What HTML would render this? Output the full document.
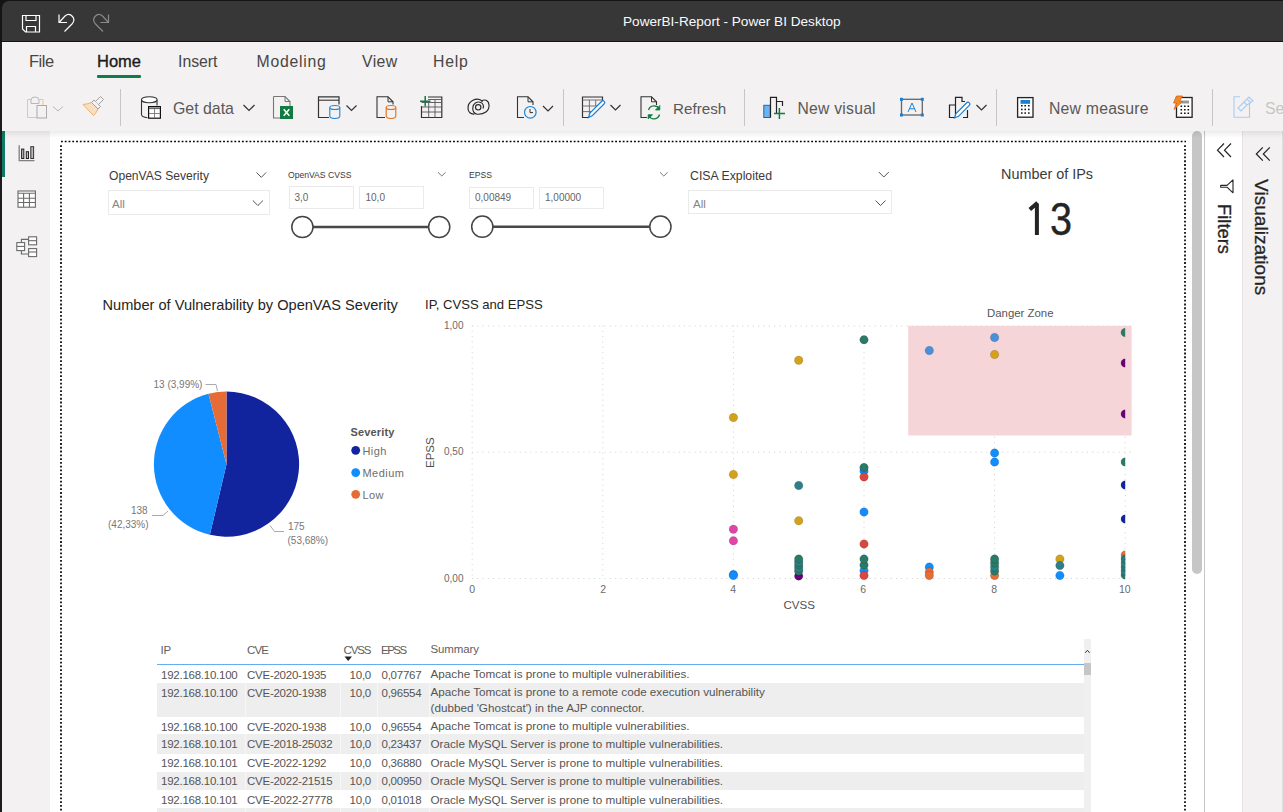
<!DOCTYPE html>
<html><head><meta charset="utf-8">
<style>
*{box-sizing:border-box}
html,body{margin:0;padding:0}
body{width:1283px;height:812px;overflow:hidden;position:relative;background:#fff;font-family:"Liberation Sans",sans-serif;color:#252423}
.a{position:absolute}
.t{position:absolute;white-space:nowrap;line-height:1}
svg{position:absolute;overflow:visible}
</style></head><body>
<!-- window frame -->
<div class="a" style="left:0;top:0;width:1283px;height:42px;background:#141416"></div>
<div class="a" style="left:2px;top:1px;width:1281px;height:40px;background:#373737;border-top-left-radius:7px"></div>
<div class="a" style="left:0;top:42px;width:2px;height:770px;background:#1c1c20"></div>
<div class="t" style="left:623px;top:15px;font-size:13.6px;color:#fafafa">PowerBI-Report - Power BI Desktop</div>

<!-- ribbon -->
<div class="a" style="left:2px;top:42px;width:1281px;height:89px;background:#f3f1f2"></div>
<div class="t" style="left:29px;top:52.8px;font-size:16.5px;letter-spacing:-0.5px;color:#484644">File</div>
<div class="t" style="left:97px;top:52.5px;font-size:16.5px;color:#1b1a19;-webkit-text-stroke:0.35px #1b1a19">Home</div>
<div class="a" style="left:97px;top:74.8px;width:44px;height:2.8px;background:#107c4c;border-radius:1px"></div>
<div class="t" style="left:178px;top:54px;font-size:15.8px;color:#484644">Insert</div>
<div class="t" style="left:256.5px;top:54px;font-size:15.8px;letter-spacing:0.75px;color:#484644">Modeling</div>
<div class="t" style="left:362px;top:54px;font-size:15.8px;letter-spacing:0.4px;color:#484644">View</div>
<div class="t" style="left:433px;top:54px;font-size:15.8px;letter-spacing:0.8px;color:#484644">Help</div>

<!-- ribbon buttons text -->
<div class="t" style="left:173px;top:101px;font-size:15.9px;color:#5a5856">Get data</div>
<div class="t" style="left:673px;top:101px;font-size:15.2px;color:#5a5856">Refresh</div>
<div class="t" style="left:797.5px;top:101px;font-size:15.7px;letter-spacing:0.25px;color:#5a5856">New visual</div>
<div class="t" style="left:1049px;top:101px;font-size:15.8px;letter-spacing:0.2px;color:#5a5856">New measure</div>
<div class="t" style="left:1265px;top:101px;font-size:15.8px;color:#c8c6c4">Se</div>
<!-- separators -->
<div class="a" style="left:120px;top:89px;width:1px;height:37px;background:#c8c6c4"></div>
<div class="a" style="left:563px;top:89px;width:1px;height:37px;background:#c8c6c4"></div>
<div class="a" style="left:744px;top:89px;width:1px;height:37px;background:#c8c6c4"></div>
<div class="a" style="left:996px;top:89px;width:1px;height:37px;background:#c8c6c4"></div>
<div class="a" style="left:1212px;top:89px;width:1px;height:37px;background:#c8c6c4"></div>


<!-- ribbon icons -->
<svg width="1283" height="131" style="left:0;top:0" fill="none" stroke-linejoin="miter">
 <!-- titlebar icons -->
 <g stroke="#fff" stroke-width="1.2">
  <path d="M22.5 15.5 H39.5 V32 H25.5 L22.5 29 Z"/>
  <path d="M26 15.5 V20.5 H36 V15.5"/>
  <path d="M26.5 32 V26.5 H35.5 V32"/>
 </g>
 <path d="M59 14.5 V22.5 H67" stroke="#fff" stroke-width="1.2"/>
 <path d="M59.5 22 L65 16 Q69 12.5 72.5 16.5 Q75.5 20 72 24 L64.5 31.5" stroke="#fff" stroke-width="1.2"/>
 <g stroke="#8a8a8a" stroke-width="1.2">
  <path d="M108.5 14.5 V22.5 H100.5"/>
  <path d="M108 22 L102.5 16 Q98.5 12.5 95 16.5 Q92 20 95.5 24 L103 31.5"/>
 </g>
 <!-- paste -->
 <path d="M31 99.5 H27.5 V117.5 H37 M39.5 99.5 H43 V105" stroke="#f2c48a" stroke-width="1"/>
 <path d="M31 103.5 V100 Q31 97 35 97 Q39 97 39 100 V103.5 Z" stroke="#b8b8b8" stroke-width="1" fill="#f3f1f2"/>
 <rect x="37" y="105.5" width="9.5" height="12.5" stroke="#ababab" stroke-width="1" fill="#f3f1f2"/>
 <path d="M53 106.5 L58 111 L63 106.5" stroke="#b8b8b8" stroke-width="1"/>
 <!-- format painter -->
 <path d="M83 104.5 Q88 104 91.5 102.5 L98 109 Q96.5 112.5 93.5 115.5 Z" stroke="#f0b070" stroke-width="1" fill="#f8dfc0"/>
 <path d="M91.5 102.5 L94 100 L100.5 106.5 L98 109 Z" stroke="#a0a0a0" stroke-width="1" fill="#f3f1f2"/>
 <path d="M95.5 101.5 L100.5 96.5 L103.5 99.5 L98.5 104.5" stroke="#a0a0a0" stroke-width="1" fill="#f3f1f2"/>
 <!-- get data -->
 <path d="M141.5 100 V114.5 Q141.5 117 147.5 117.8" stroke="#333" stroke-width="1.1"/>
 <path d="M157 100 V105.5" stroke="#333" stroke-width="1.1"/>
 <ellipse cx="149.3" cy="99.7" rx="7.8" ry="3" stroke="#333" stroke-width="1.1" fill="#fff"/>
 <rect x="148.6" y="106.6" width="11.8" height="11.6" stroke="#111" stroke-width="1.2" fill="#fff"/>
 <path d="M149 108.3 H160" stroke="#666" stroke-width="1.6"/>
 <path d="M154.5 109 V118 M149 113.5 H160" stroke="#777" stroke-width="0.9"/>
 <path d="M243.5 105 L249 110.5 L254.5 105" stroke="#323130" stroke-width="1.2"/>
 <!-- excel -->
 <path d="M273.5 96.5 H285 L290 101.5 V106 M280 118 H273.5 V96.5" stroke="#777" stroke-width="1.1" fill="none"/>
 <path d="M285 96.5 V101.5 H290" stroke="#777" stroke-width="1"/>
 <rect x="280" y="106" width="13" height="13" fill="#107c41"/>
 <path d="M283.7 109.3 L289.3 115.7 M289.3 109.3 L283.7 115.7" stroke="#fff" stroke-width="1.6"/>
 <!-- dataset window -->
 <path d="M329 117.5 H318.5 V96.8 H339 V104.5" stroke="#333" stroke-width="1.2"/>
 <path d="M318.5 100.2 H339" stroke="#333" stroke-width="1.1"/>
 <path d="M329.8 107.5 V116 Q329.8 118.5 334.8 118.5 Q339.8 118.5 339.8 116 V107.5" stroke="#1a86d8" stroke-width="1.1" fill="#f3f1f2"/>
 <ellipse cx="334.8" cy="107.5" rx="5" ry="2" stroke="#1a86d8" stroke-width="1.1" fill="#f3f1f2"/>
 <path d="M346.5 105.5 L351.5 110.5 L356.5 105.5" stroke="#333" stroke-width="1.2"/>
 <!-- page orange cylinder -->
 <path d="M385 117.5 H377 V96.8 H388 L393 101.8 V104.5" stroke="#333" stroke-width="1.1"/>
 <path d="M388 96.8 V101.8 H393" stroke="#333" stroke-width="1"/>
 <path d="M386.2 107.5 V116 Q386.2 118.5 391 118.5 Q395.8 118.5 395.8 116 V107.5" stroke="#e0701f" stroke-width="1.1" fill="#f3f1f2"/>
 <ellipse cx="391" cy="107.5" rx="4.8" ry="2" stroke="#e0701f" stroke-width="1.1" fill="#f3f1f2"/>
 <!-- enter data -->
 <path d="M421.5 106 V117.5 H441.8 V97 H428" stroke="#333" stroke-width="1.2"/>
 <path d="M428 99.5 H441.8 M421.5 102.5 H441.8 M421.5 107 H441.8 M421.5 112 H441.8 M428.7 102.5 V117.5 M435 99.5 V117.5" stroke="#555" stroke-width="0.9"/>
 <path d="M420 101.2 H430.5 M425.2 96 V106.5" stroke="#107c41" stroke-width="1.5"/>
 <!-- dataverse -->
 <g stroke="#2a2a2a" stroke-width="1.15" fill="none">
  <path d="M474.5 114 C466.5 115 466 104 472.5 100.5 C476.5 98.5 480.5 99.2 482.5 101.5"/>
  <path d="M481.5 101.3 C484 99 488.5 99.5 489 105 C489.5 111 484 114.5 477.5 114.2 C474 114 472.5 111 472.8 108"/>
  <path d="M472.8 108 C473 103 477 101.5 480 102.2 C483.5 103 484 106.5 483 108.5"/>
  <circle cx="478.2" cy="107.3" r="2.7"/>
 </g>
 <!-- page clock -->
 <path d="M524 117.5 H517.5 V96.8 H528 L533 101.8 V105" stroke="#333" stroke-width="1.1"/>
 <path d="M528 96.8 V101.8 H533" stroke="#333" stroke-width="1"/>
 <circle cx="530.3" cy="112.3" r="5.8" stroke="#1a86d8" stroke-width="1.2" fill="#f3f1f2"/>
 <path d="M530 109 V112.6 H533" stroke="#333" stroke-width="1"/>
 <path d="M543 106 L548 111 L553 106" stroke="#333" stroke-width="1.2"/>
 <!-- transform data -->
 <path d="M588 117.5 H582.5 V97 H602.5 V104" stroke="#333" stroke-width="1.2"/>
 <path d="M582.5 100 H602.5 M582.5 106 H598 M582.5 111.6 H592 M589.4 100 V117 M595.7 100 V106" stroke="#666" stroke-width="0.9"/>
 <path d="M588.5 117.5 L590 113 L601.5 101.5 Q603 100 604.3 101.3 Q605.5 102.6 604 104 L592.5 115.5 Z" stroke="#1a7fd4" stroke-width="1.2" fill="#fff"/>
 <path d="M610.5 105 L615.5 110 L620.5 105" stroke="#333" stroke-width="1.2"/>
 <!-- refresh -->
 <path d="M647 117.5 H641 V96.8 H651.5 L656.5 101.8 V105" stroke="#333" stroke-width="1.1"/>
 <path d="M651.5 96.8 V101.8 H656.5" stroke="#333" stroke-width="1"/>
 <path d="M648.5 110 A5.8 5.8 0 0 1 659.2 109 M659.5 114.5 A5.8 5.8 0 0 1 648.8 115.8" stroke="#107c41" stroke-width="1.3"/>
 <path d="M659.8 105.5 V110 H655.5 Z M648.2 119 V114.7 H652.5 Z" fill="#107c41" stroke="#107c41" stroke-width="0.8"/>
 <!-- new visual -->
 <rect x="763.8" y="105.3" width="6.5" height="12.2" fill="#6cb4f0" stroke="#0f6cbd" stroke-width="1"/>
 <path d="M770.5 117.5 V97.3 H776.5 V113 M776.5 101.5 H782.5 V106" stroke="#222" stroke-width="1.2"/>
 <path d="M774 113.4 H785 M779.4 108 V119" stroke="#107c41" stroke-width="1.5"/>
 <!-- text box -->
 <rect x="901.5" y="99.3" width="20.8" height="15.7" stroke="#666" stroke-width="1.3"/>
 <g fill="#1a7fd4"><rect x="900" y="97.8" width="3" height="3"/><rect x="920.8" y="97.8" width="3" height="3"/><rect x="900" y="113.5" width="3" height="3"/><rect x="920.8" y="113.5" width="3" height="3"/></g>
 <path d="M908 112 L912 103 L916 112 M909.5 108.8 H914.5" stroke="#1a86d8" stroke-width="1"/>
 <!-- buttons -->
 <path d="M955 105 H949.5 V117.5 H955 M955.5 117.5 V97.3 H962 V101.5 H965 M967.5 110 V117.5 H963" stroke="#222" stroke-width="1.2"/>
 <path d="M954.5 118 L956 113.5 L966.5 103 Q968 101.5 969.3 102.8 Q970.6 104.1 969 105.6 L958.5 116.3 Z" stroke="#1a7fd4" stroke-width="1.2" fill="#fff"/>
 <path d="M976.5 105 L981.5 110 L986.5 105" stroke="#333" stroke-width="1.2"/>
 <!-- calculator -->
 <rect x="1017.6" y="97.6" width="15.4" height="19.6" stroke="#222" stroke-width="1.3" fill="#fff"/>
 <rect x="1020.5" y="100" width="9.6" height="3.8" fill="#1a7fd4"/>
 <g fill="#111"><rect x="1021" y="105" width="1.6" height="1.5"/><rect x="1024.4" y="105" width="1.6" height="1.5"/><rect x="1028" y="105" width="1.6" height="1.5"/>
 <rect x="1021" y="108.7" width="1.6" height="1.5"/><rect x="1024.4" y="108.7" width="1.6" height="1.5"/><rect x="1028" y="108.7" width="1.6" height="1.5"/>
 <rect x="1021" y="112.3" width="1.6" height="1.5"/><rect x="1024.4" y="112.3" width="1.6" height="1.5"/><rect x="1028" y="112.3" width="1.6" height="1.5"/></g>
 <!-- quick measure -->
 <rect x="1176.5" y="97.5" width="15.6" height="19.8" stroke="#222" stroke-width="1.3" fill="#fff"/>
 <rect x="1180" y="100.5" width="9" height="3" fill="#999"/>
 <g fill="#111"><rect x="1180.5" y="105.5" width="1.6" height="1.5"/><rect x="1184" y="105.5" width="1.6" height="1.5"/><rect x="1187.5" y="105.5" width="1.6" height="1.5"/>
 <rect x="1180.5" y="109" width="1.6" height="1.5"/><rect x="1184" y="109" width="1.6" height="1.5"/><rect x="1187.5" y="109" width="1.6" height="1.5"/>
 <rect x="1180.5" y="112.5" width="1.6" height="1.5"/><rect x="1184" y="112.5" width="1.6" height="1.5"/><rect x="1187.5" y="112.5" width="1.6" height="1.5"/></g>
 <path d="M1176.5 96 H1182.5 L1179.5 101.5 H1182.5 L1174 109.5 L1176.5 103 H1173.5 Z" fill="#f08a24" stroke="#e0601a" stroke-width="0.8"/>
 <!-- disabled -->
 <path d="M1240 96.8 H1234 V117.2 H1249.5 V103" stroke="#a8cdf0" stroke-width="1.1"/>
 <path d="M1238 108 L1244 102 L1247 105 L1241 111 Z M1244 102 L1249 97 L1253 101 L1247 105 M1247 99 L1251 103" stroke="#a8cdf0" stroke-width="1.1"/>
</svg>

<!-- ribbon shadow -->

<!-- left nav -->
<div class="a" style="left:2px;top:131px;width:48px;height:681px;background:#f3f1f2"></div>
<div class="a" style="left:2px;top:131px;width:3px;height:46px;background:#117865"></div>

<!-- page dotted border -->
<svg width="1283" height="812" style="left:0;top:0">
  <path d="M61 141.5 H1186 M61 145.25 V812 M1185 145.25 V812" stroke="#000" stroke-width="1.7" stroke-dasharray="1.8 1.97" fill="none"/>
</svg>


<!-- ===== slicers ===== -->
<div class="t" style="left:109px;top:170px;font-size:12.1px;color:#3b3a39">OpenVAS Severity</div>
<div class="a" style="left:107.5px;top:189.5px;width:162px;height:25px;border:1px solid #eaeaea;background:#fff"></div>
<div class="t" style="left:112px;top:199px;font-size:11.5px;color:#858585">All</div>
<div class="t" style="left:288px;top:170.7px;font-size:8.6px;color:#3b3a39">OpenVAS CVSS</div>
<div class="a" style="left:288.5px;top:186px;width:65.5px;height:22.5px;border:1px solid #eaeaea;background:#fff"></div>
<div class="a" style="left:358.5px;top:186px;width:65.5px;height:22.5px;border:1px solid #eaeaea;background:#fff"></div>
<div class="t" style="left:294.5px;top:193px;font-size:10px;color:#666">3,0</div>
<div class="t" style="left:365.5px;top:193px;font-size:10px;color:#666">10,0</div>
<div class="t" style="left:469px;top:170.7px;font-size:8.6px;color:#3b3a39">EPSS</div>
<div class="a" style="left:468.5px;top:186.5px;width:65.5px;height:22.5px;border:1px solid #eaeaea;background:#fff"></div>
<div class="a" style="left:538.5px;top:186.5px;width:65.5px;height:22.5px;border:1px solid #eaeaea;background:#fff"></div>
<div class="t" style="left:475px;top:193px;font-size:10px;color:#666">0,00849</div>
<div class="t" style="left:545px;top:193px;font-size:10px;color:#666">1,00000</div>
<div class="t" style="left:690px;top:170px;font-size:12.3px;color:#3b3a39">CISA Exploited</div>
<div class="a" style="left:688px;top:190px;width:204px;height:24px;border:1px solid #eaeaea;background:#fff"></div>
<div class="t" style="left:693px;top:199px;font-size:11.5px;color:#858585">All</div>
<svg width="1283" height="300" style="left:0;top:0" fill="none">
 <path d="M256.5 172.5 L261.3 177.3 L266.1 172.5" stroke="#555" stroke-width="1"/>
 <path d="M252.8 200.5 L257.9 205.6 L263 200.5" stroke="#555" stroke-width="1"/>
 <path d="M438 172.3 L441.8 176 L445.6 172.3" stroke="#666" stroke-width="0.9"/>
 <path d="M660 172.3 L663.8 176 L667.6 172.3" stroke="#666" stroke-width="0.9"/>
 <path d="M878.8 172 L883.8 177 L888.8 172" stroke="#555" stroke-width="1"/>
 <path d="M875.5 200.5 L880.5 205.5 L885.5 200.5" stroke="#555" stroke-width="1"/>
 <path d="M313 227 H428.5" stroke="#484848" stroke-width="2.6"/>
 <circle cx="302.4" cy="227" r="10.6" stroke="#444" stroke-width="1.5" fill="#fff"/>
 <circle cx="439.2" cy="227" r="10.6" stroke="#444" stroke-width="1.5" fill="#fff"/>
 <path d="M493 226.7 H649.5" stroke="#484848" stroke-width="2.6"/>
 <circle cx="482.3" cy="226.7" r="10.6" stroke="#444" stroke-width="1.5" fill="#fff"/>
 <circle cx="660.4" cy="226.7" r="10.6" stroke="#444" stroke-width="1.5" fill="#fff"/>
</svg>
<!-- KPI card -->
<div class="t" style="left:1001px;top:167px;font-size:14.4px;color:#3b3a39">Number of IPs</div>
<svg width="1283" height="812" style="left:0;top:0"><path d="M1036.9 203.6 V235.1 M1037.6 202.8 L1029.8 209.5" stroke="#252423" stroke-width="4" stroke-linecap="butt" fill="none"/></svg>
<div class="t" style="left:1049.5px;top:196px;font-size:46px;color:#252423;-webkit-text-stroke:0.4px #252423;transform-origin:0 0;transform:scaleX(0.86)">3</div>


<!-- ===== pie chart ===== -->
<div class="t" style="left:102.5px;top:298px;font-size:14.6px;color:#252423">Number of Vulnerability by OpenVAS Severity</div>
<svg width="1283" height="812" style="left:0;top:0">
 <path d="M226.5 464.2 L226.50 391.60 A72.6 72.6 0 1 1 209.86 534.87 Z" fill="#12239e"/>
 <path d="M226.5 464.2 L209.86 534.87 A72.6 72.6 0 0 1 208.49 393.87 Z" fill="#118dff"/>
 <path d="M226.5 464.2 L208.49 393.87 A72.6 72.6 0 0 1 226.50 391.60 Z" fill="#e66c37"/>
 <g stroke="#aaa" stroke-width="1" fill="none">
  <path d="M205.5 384.5 H216 L217.5 391"/>
  <path d="M152 515.5 H163 L168 511"/>
  <path d="M270 525.5 L274.5 531.5 H284"/>
 </g>
 <circle cx="355.7" cy="450.3" r="4.4" fill="#12239e"/>
 <circle cx="355.7" cy="472.6" r="4.4" fill="#118dff"/>
 <circle cx="355.7" cy="494.3" r="4.4" fill="#e66c37"/>
</svg>
<div class="t" style="left:153.5px;top:380px;font-size:10px;color:#777">13 (3,99%)</div>
<div class="t" style="left:131px;top:505.5px;font-size:10px;color:#777">138</div>
<div class="t" style="left:108px;top:519.5px;font-size:10px;color:#777">(42,33%)</div>
<div class="t" style="left:288px;top:521.5px;font-size:10px;color:#777">175</div>
<div class="t" style="left:287.5px;top:535.5px;font-size:10px;color:#777">(53,68%)</div>
<div class="t" style="left:350.5px;top:427px;font-size:11px;font-weight:bold;letter-spacing:0.15px;color:#555">Severity</div>
<div class="t" style="left:362.5px;top:446px;font-size:11px;letter-spacing:0.4px;color:#6e6e6e">High</div>
<div class="t" style="left:362.5px;top:468px;font-size:11px;letter-spacing:0.45px;color:#6e6e6e">Medium</div>
<div class="t" style="left:362.5px;top:489.5px;font-size:11px;letter-spacing:0.4px;color:#6e6e6e">Low</div>


<!-- ===== scatter ===== -->
<div class="t" style="left:425px;top:297.5px;font-size:13.1px;color:#252423">IP, CVSS and EPSS</div>
<svg width="1283" height="812" style="left:0;top:0">
 <path d="M472.2 325.5 V578.5" stroke="#d4d4d4" stroke-width="1" stroke-dasharray="1.1 4.2"/>
 <path d="M602.8 325.5 V578.5" stroke="#d4d4d4" stroke-width="1" stroke-dasharray="1.1 4.2"/>
 <path d="M733.4 325.5 V578.5" stroke="#d4d4d4" stroke-width="1" stroke-dasharray="1.1 4.2"/>
 <path d="M864.0 325.5 V578.5" stroke="#d4d4d4" stroke-width="1" stroke-dasharray="1.1 4.2"/>
 <path d="M994.6 325.5 V578.5" stroke="#d4d4d4" stroke-width="1" stroke-dasharray="1.1 4.2"/>
 <path d="M1125.2 325.5 V578.5" stroke="#d4d4d4" stroke-width="1" stroke-dasharray="1.1 4.2"/>
 <path d="M472 578.5 H1131" stroke="#d4d4d4" stroke-width="1" stroke-dasharray="1.1 4.2"/>
 <path d="M472 452.2 H1131" stroke="#d4d4d4" stroke-width="1" stroke-dasharray="1.1 4.2"/>
 <path d="M472 326.0 H1131" stroke="#d4d4d4" stroke-width="1" stroke-dasharray="1.1 4.2"/>

 <rect x="908.2" y="325.8" width="223.4" height="109.7" fill="#f5d5d7"/>
 <clipPath id="pc"><rect x="440" y="300" width="685.2" height="300"/></clipPath>
 <g clip-path="url(#pc)">
 <circle cx="733.4" cy="417.6" r="4.25" fill="#d4a21a" stroke="rgba(0,0,0,0.18)" stroke-width="0.7"/>
 <circle cx="733.4" cy="474.5" r="4.25" fill="#d4a21a" stroke="rgba(0,0,0,0.18)" stroke-width="0.7"/>
 <circle cx="733.4" cy="529.3" r="4.25" fill="#e044a7" stroke="rgba(0,0,0,0.18)" stroke-width="0.7"/>
 <circle cx="733.4" cy="540.7" r="4.25" fill="#e044a7" stroke="rgba(0,0,0,0.18)" stroke-width="0.7"/>
 <circle cx="733.4" cy="574.5" r="4.25" fill="#118dff" stroke="rgba(0,0,0,0.18)" stroke-width="0.7"/>
 <circle cx="733.4" cy="575.5" r="4.25" fill="#118dff" stroke="rgba(0,0,0,0.18)" stroke-width="0.7"/>
 <circle cx="798.7" cy="360.3" r="4.25" fill="#d4a21a" stroke="rgba(0,0,0,0.18)" stroke-width="0.7"/>
 <circle cx="798.7" cy="485.5" r="4.25" fill="#2e7f88" stroke="rgba(0,0,0,0.18)" stroke-width="0.7"/>
 <circle cx="798.7" cy="520.7" r="4.25" fill="#d4a21a" stroke="rgba(0,0,0,0.18)" stroke-width="0.7"/>
 <circle cx="798.7" cy="576" r="4.25" fill="#6b007b" stroke="rgba(0,0,0,0.18)" stroke-width="0.7"/>
 <circle cx="798.7" cy="571" r="4.25" fill="#2a7a68" stroke="rgba(0,0,0,0.18)" stroke-width="0.7"/>
 <circle cx="798.7" cy="568" r="4.25" fill="#2e7f88" stroke="rgba(0,0,0,0.18)" stroke-width="0.7"/>
 <circle cx="798.7" cy="565" r="4.25" fill="#2a7a68" stroke="rgba(0,0,0,0.18)" stroke-width="0.7"/>
 <circle cx="798.7" cy="562" r="4.25" fill="#2e7f88" stroke="rgba(0,0,0,0.18)" stroke-width="0.7"/>
 <circle cx="798.7" cy="559" r="4.25" fill="#2a7a68" stroke="rgba(0,0,0,0.18)" stroke-width="0.7"/>
 <circle cx="864.0" cy="339.7" r="4.25" fill="#2a7a68" stroke="rgba(0,0,0,0.18)" stroke-width="0.7"/>
 <circle cx="864.0" cy="471" r="4.25" fill="#118dff" stroke="rgba(0,0,0,0.18)" stroke-width="0.7"/>
 <circle cx="864.0" cy="467.6" r="4.25" fill="#2a7a68" stroke="rgba(0,0,0,0.18)" stroke-width="0.7"/>
 <circle cx="864.0" cy="476.9" r="4.25" fill="#d9473f" stroke="rgba(0,0,0,0.18)" stroke-width="0.7"/>
 <circle cx="864.0" cy="512" r="4.25" fill="#118dff" stroke="rgba(0,0,0,0.18)" stroke-width="0.7"/>
 <circle cx="864.0" cy="544" r="4.25" fill="#d9473f" stroke="rgba(0,0,0,0.18)" stroke-width="0.7"/>
 <circle cx="864.0" cy="570.5" r="4.25" fill="#118dff" stroke="rgba(0,0,0,0.18)" stroke-width="0.7"/>
 <circle cx="864.0" cy="565" r="4.25" fill="#2a7a68" stroke="rgba(0,0,0,0.18)" stroke-width="0.7"/>
 <circle cx="864.0" cy="559" r="4.25" fill="#2a7a68" stroke="rgba(0,0,0,0.18)" stroke-width="0.7"/>
 <circle cx="864.0" cy="575.5" r="4.25" fill="#d9473f" stroke="rgba(0,0,0,0.18)" stroke-width="0.7"/>
 <circle cx="929.3" cy="350.5" r="4.25" fill="#4a90d9" stroke="rgba(0,0,0,0.18)" stroke-width="0.7"/>
 <circle cx="929.3" cy="567" r="4.25" fill="#118dff" stroke="rgba(0,0,0,0.18)" stroke-width="0.7"/>
 <circle cx="929.3" cy="572" r="4.25" fill="#e66c37" stroke="rgba(0,0,0,0.18)" stroke-width="0.7"/>
 <circle cx="929.3" cy="575.5" r="4.25" fill="#e66c37" stroke="rgba(0,0,0,0.18)" stroke-width="0.7"/>
 <circle cx="994.6" cy="337.5" r="4.25" fill="#4a90d9" stroke="rgba(0,0,0,0.18)" stroke-width="0.7"/>
 <circle cx="994.6" cy="354.5" r="4.25" fill="#d4a21a" stroke="rgba(0,0,0,0.18)" stroke-width="0.7"/>
 <circle cx="994.6" cy="453" r="4.25" fill="#118dff" stroke="rgba(0,0,0,0.18)" stroke-width="0.7"/>
 <circle cx="994.6" cy="462" r="4.25" fill="#118dff" stroke="rgba(0,0,0,0.18)" stroke-width="0.7"/>
 <circle cx="994.6" cy="575.5" r="4.25" fill="#e66c37" stroke="rgba(0,0,0,0.18)" stroke-width="0.7"/>
 <circle cx="994.6" cy="571" r="4.25" fill="#2a7a68" stroke="rgba(0,0,0,0.18)" stroke-width="0.7"/>
 <circle cx="994.6" cy="567" r="4.25" fill="#2e7f88" stroke="rgba(0,0,0,0.18)" stroke-width="0.7"/>
 <circle cx="994.6" cy="563" r="4.25" fill="#2a7a68" stroke="rgba(0,0,0,0.18)" stroke-width="0.7"/>
 <circle cx="994.6" cy="559" r="4.25" fill="#2a7a68" stroke="rgba(0,0,0,0.18)" stroke-width="0.7"/>
 <circle cx="1059.9" cy="559" r="4.25" fill="#d4a21a" stroke="rgba(0,0,0,0.18)" stroke-width="0.7"/>
 <circle cx="1059.9" cy="565.5" r="4.25" fill="#2e7f88" stroke="rgba(0,0,0,0.18)" stroke-width="0.7"/>
 <circle cx="1059.9" cy="575.5" r="4.25" fill="#118dff" stroke="rgba(0,0,0,0.18)" stroke-width="0.7"/>
 <circle cx="1125.2" cy="332.5" r="4.25" fill="#2a7a68" stroke="rgba(0,0,0,0.18)" stroke-width="0.7"/>
 <circle cx="1125.2" cy="363" r="4.25" fill="#6b007b" stroke="rgba(0,0,0,0.18)" stroke-width="0.7"/>
 <circle cx="1125.2" cy="414" r="4.25" fill="#6b007b" stroke="rgba(0,0,0,0.18)" stroke-width="0.7"/>
 <circle cx="1125.2" cy="462" r="4.25" fill="#2a7a68" stroke="rgba(0,0,0,0.18)" stroke-width="0.7"/>
 <circle cx="1125.2" cy="485" r="4.25" fill="#12239e" stroke="rgba(0,0,0,0.18)" stroke-width="0.7"/>
 <circle cx="1125.2" cy="519" r="4.25" fill="#12239e" stroke="rgba(0,0,0,0.18)" stroke-width="0.7"/>
 <circle cx="1125.2" cy="555" r="4.25" fill="#e66c37" stroke="rgba(0,0,0,0.18)" stroke-width="0.7"/>
 <circle cx="1125.2" cy="575" r="4.25" fill="#2a7a68" stroke="rgba(0,0,0,0.18)" stroke-width="0.7"/>
 <circle cx="1125.2" cy="571" r="4.25" fill="#2e7f88" stroke="rgba(0,0,0,0.18)" stroke-width="0.7"/>
 <circle cx="1125.2" cy="567" r="4.25" fill="#2a7a68" stroke="rgba(0,0,0,0.18)" stroke-width="0.7"/>
 <circle cx="1125.2" cy="563" r="4.25" fill="#2e7f88" stroke="rgba(0,0,0,0.18)" stroke-width="0.7"/>
 <circle cx="1125.2" cy="559" r="4.25" fill="#2a7a68" stroke="rgba(0,0,0,0.18)" stroke-width="0.7"/>
 </g>
</svg>
<div class="t" style="left:444px;top:321px;font-size:10px;color:#6a6a6a">1,00</div>
<div class="t" style="left:444px;top:447.2px;font-size:10px;color:#6a6a6a">0,50</div>
<div class="t" style="left:444px;top:574px;font-size:10px;color:#6a6a6a">0,00</div>
<div class="t" style="left:469.2px;top:583.6px;font-size:10.5px;color:#6a6a6a">0</div>
<div class="t" style="left:600.2px;top:583.6px;font-size:10.5px;color:#6a6a6a">2</div>
<div class="t" style="left:730.2px;top:583.6px;font-size:10.5px;color:#6a6a6a">4</div>
<div class="t" style="left:860.2px;top:583.6px;font-size:10.5px;color:#6a6a6a">6</div>
<div class="t" style="left:991.2px;top:583.6px;font-size:10.5px;color:#6a6a6a">8</div>
<div class="t" style="left:1119px;top:583.6px;font-size:10.5px;color:#6a6a6a">10</div>
<div class="t" style="left:783.5px;top:599.3px;font-size:11.6px;color:#505050">CVSS</div>
<div class="t" style="left:425.3px;top:467.5px;font-size:11.5px;color:#505050;transform-origin:0 0;transform:rotate(-90deg)">EPSS</div>
<div class="t" style="left:987px;top:308px;font-size:11.4px;color:#555">Danger Zone</div>


<!-- ===== table ===== -->
<div class="t" style="left:160.5px;top:644.5px;font-size:11.5px;letter-spacing:-0.25px;color:#606060">IP</div>
<div class="t" style="left:247px;top:644.5px;font-size:11.5px;letter-spacing:-0.9px;color:#606060">CVE</div>
<div class="t" style="left:343.5px;top:644.5px;font-size:11.5px;letter-spacing:-1.1px;color:#606060">CVSS</div>
<div class="t" style="left:381px;top:644.5px;font-size:11.5px;letter-spacing:-1.5px;color:#606060">EPSS</div>
<div class="t" style="left:430.5px;top:644.3px;font-size:11.5px;letter-spacing:-0.1px;color:#606060">Summary</div>
<svg width="1283" height="812" style="left:0;top:0"><path d="M344.5 656.5 H352 L348.2 661 Z" fill="#222"/></svg>
<div class="a" style="left:156.5px;top:663.5px;width:927px;height:1.5px;background:#64aef0"></div>
<div class="a" style="left:156.5px;top:665px;width:927px;height:18.0px;background:#fff"></div>
<div class="t" style="left:161px;top:669.5px;font-size:11.5px;letter-spacing:-0.25px;color:#555">192.168.10.100</div>
<div class="t" style="left:247px;top:669.5px;font-size:11.5px;letter-spacing:-0.25px;color:#555">CVE-2020-1935</div>
<div class="t" style="left:341px;top:669.5px;width:30px;text-align:right;font-size:11.5px;letter-spacing:-0.25px;color:#555">10,0</div>
<div class="t" style="left:381.5px;top:669.5px;font-size:11.5px;letter-spacing:-0.25px;color:#555">0,07767</div>
<div class="t" style="left:430.5px;top:668.3px;font-size:11.7px;color:#555">Apache Tomcat is prone to multiple vulnerabilities.</div>
<div class="a" style="left:156.5px;top:683px;width:927px;height:34.0px;background:#eeeeee"></div>
<div class="a" style="left:244.5px;top:683px;width:1px;opacity:0.5;height:34.0px;background:#fff"></div>
<div class="a" style="left:339.5px;top:683px;width:1px;opacity:0.5;height:34.0px;background:#fff"></div>
<div class="a" style="left:376.5px;top:683px;width:1px;opacity:0.5;height:34.0px;background:#fff"></div>
<div class="a" style="left:428.5px;top:683px;width:1px;opacity:0.5;height:34.0px;background:#fff"></div>
<div class="t" style="left:161px;top:687.5px;font-size:11.5px;letter-spacing:-0.25px;color:#555">192.168.10.100</div>
<div class="t" style="left:247px;top:687.5px;font-size:11.5px;letter-spacing:-0.25px;color:#555">CVE-2020-1938</div>
<div class="t" style="left:341px;top:687.5px;width:30px;text-align:right;font-size:11.5px;letter-spacing:-0.25px;color:#555">10,0</div>
<div class="t" style="left:381.5px;top:687.5px;font-size:11.5px;letter-spacing:-0.25px;color:#555">0,96554</div>
<div class="t" style="left:430.5px;top:686.3px;font-size:11.7px;color:#555">Apache Tomcat is prone to a remote code execution vulnerability</div>
<div class="t" style="left:430.5px;top:702.3px;font-size:11.7px;color:#555">(dubbed &#39;Ghostcat&#39;) in the AJP connector.</div>
<div class="a" style="left:156.5px;top:717px;width:927px;height:17.4px;background:#fff"></div>
<div class="t" style="left:161px;top:721.5px;font-size:11.5px;letter-spacing:-0.25px;color:#555">192.168.10.100</div>
<div class="t" style="left:247px;top:721.5px;font-size:11.5px;letter-spacing:-0.25px;color:#555">CVE-2020-1938</div>
<div class="t" style="left:341px;top:721.5px;width:30px;text-align:right;font-size:11.5px;letter-spacing:-0.25px;color:#555">10,0</div>
<div class="t" style="left:381.5px;top:721.5px;font-size:11.5px;letter-spacing:-0.25px;color:#555">0,96554</div>
<div class="t" style="left:430.5px;top:720.3px;font-size:11.7px;color:#555">Apache Tomcat is prone to multiple vulnerabilities.</div>
<div class="a" style="left:156.5px;top:734.4px;width:927px;height:19.4px;background:#eeeeee"></div>
<div class="a" style="left:244.5px;top:734.4px;width:1px;opacity:0.5;height:19.4px;background:#fff"></div>
<div class="a" style="left:339.5px;top:734.4px;width:1px;opacity:0.5;height:19.4px;background:#fff"></div>
<div class="a" style="left:376.5px;top:734.4px;width:1px;opacity:0.5;height:19.4px;background:#fff"></div>
<div class="a" style="left:428.5px;top:734.4px;width:1px;opacity:0.5;height:19.4px;background:#fff"></div>
<div class="t" style="left:161px;top:738.9px;font-size:11.5px;letter-spacing:-0.25px;color:#555">192.168.10.101</div>
<div class="t" style="left:247px;top:738.9px;font-size:11.5px;letter-spacing:-0.25px;color:#555">CVE-2018-25032</div>
<div class="t" style="left:341px;top:738.9px;width:30px;text-align:right;font-size:11.5px;letter-spacing:-0.25px;color:#555">10,0</div>
<div class="t" style="left:381.5px;top:738.9px;font-size:11.5px;letter-spacing:-0.25px;color:#555">0,23437</div>
<div class="t" style="left:430.5px;top:737.7px;font-size:11.7px;color:#555">Oracle MySQL Server is prone to multiple vulnerabilities.</div>
<div class="a" style="left:156.5px;top:753.8px;width:927px;height:18.0px;background:#fff"></div>
<div class="t" style="left:161px;top:758.3px;font-size:11.5px;letter-spacing:-0.25px;color:#555">192.168.10.101</div>
<div class="t" style="left:247px;top:758.3px;font-size:11.5px;letter-spacing:-0.25px;color:#555">CVE-2022-1292</div>
<div class="t" style="left:341px;top:758.3px;width:30px;text-align:right;font-size:11.5px;letter-spacing:-0.25px;color:#555">10,0</div>
<div class="t" style="left:381.5px;top:758.3px;font-size:11.5px;letter-spacing:-0.25px;color:#555">0,36880</div>
<div class="t" style="left:430.5px;top:757.1px;font-size:11.7px;color:#555">Oracle MySQL Server is prone to multiple vulnerabilities.</div>
<div class="a" style="left:156.5px;top:771.8px;width:927px;height:18.7px;background:#eeeeee"></div>
<div class="a" style="left:244.5px;top:771.8px;width:1px;opacity:0.5;height:18.7px;background:#fff"></div>
<div class="a" style="left:339.5px;top:771.8px;width:1px;opacity:0.5;height:18.7px;background:#fff"></div>
<div class="a" style="left:376.5px;top:771.8px;width:1px;opacity:0.5;height:18.7px;background:#fff"></div>
<div class="a" style="left:428.5px;top:771.8px;width:1px;opacity:0.5;height:18.7px;background:#fff"></div>
<div class="t" style="left:161px;top:776.3px;font-size:11.5px;letter-spacing:-0.25px;color:#555">192.168.10.101</div>
<div class="t" style="left:247px;top:776.3px;font-size:11.5px;letter-spacing:-0.25px;color:#555">CVE-2022-21515</div>
<div class="t" style="left:341px;top:776.3px;width:30px;text-align:right;font-size:11.5px;letter-spacing:-0.25px;color:#555">10,0</div>
<div class="t" style="left:381.5px;top:776.3px;font-size:11.5px;letter-spacing:-0.25px;color:#555">0,00950</div>
<div class="t" style="left:430.5px;top:775.1px;font-size:11.7px;color:#555">Oracle MySQL Server is prone to multiple vulnerabilities.</div>
<div class="a" style="left:156.5px;top:790.5px;width:927px;height:17.5px;background:#fff"></div>
<div class="t" style="left:161px;top:795.0px;font-size:11.5px;letter-spacing:-0.25px;color:#555">192.168.10.101</div>
<div class="t" style="left:247px;top:795.0px;font-size:11.5px;letter-spacing:-0.25px;color:#555">CVE-2022-27778</div>
<div class="t" style="left:341px;top:795.0px;width:30px;text-align:right;font-size:11.5px;letter-spacing:-0.25px;color:#555">10,0</div>
<div class="t" style="left:381.5px;top:795.0px;font-size:11.5px;letter-spacing:-0.25px;color:#555">0,01018</div>
<div class="t" style="left:430.5px;top:793.8px;font-size:11.7px;color:#555">Oracle MySQL Server is prone to multiple vulnerabilities.</div>
<div class="a" style="left:156.5px;top:808px;width:927px;height:18.0px;background:#eeeeee"></div>
<div class="a" style="left:244.5px;top:808px;width:1px;opacity:0.5;height:18.0px;background:#fff"></div>
<div class="a" style="left:339.5px;top:808px;width:1px;opacity:0.5;height:18.0px;background:#fff"></div>
<div class="a" style="left:376.5px;top:808px;width:1px;opacity:0.5;height:18.0px;background:#fff"></div>
<div class="a" style="left:428.5px;top:808px;width:1px;opacity:0.5;height:18.0px;background:#fff"></div>
<div class="a" style="left:1083.5px;top:639px;width:7.7px;height:173px;background:#f0f0f0"></div>
<div class="a" style="left:1083.5px;top:662.8px;width:7.7px;height:12.2px;background:#c6c6c6"></div>
<svg width="1283" height="812" style="left:0;top:0"><path d="M1085.2 652.8 L1087.4 650.3 L1089.6 652.8" stroke="#333" stroke-width="1" fill="none"/></svg>




<!-- scrollbar -->
<div class="a" style="left:1192px;top:131px;width:10px;height:443px;background:#c6c6c6;border-radius:5px"></div>
<div class="a" style="left:1204px;top:131px;width:1px;height:681px;background:#c8c6c4"></div>
<!-- filters pane -->
<div class="a" style="left:1205px;top:131px;width:37px;height:681px;background:#fff"></div>
<!-- viz pane -->
<div class="a" style="left:1242px;top:131px;width:41px;height:681px;background:#f3f1f2;border-left:1px solid #e6e4e2;border-right:1px solid #e1dfdd"></div>

<div class="t" style="left:1233px;top:204px;font-size:18.4px;color:#252423;-webkit-text-stroke:0.3px #252423;transform-origin:0 0;transform:rotate(90deg)">Filters</div>
<div class="t" style="left:1271px;top:179px;font-size:19.1px;color:#252423;-webkit-text-stroke:0.25px #252423;transform-origin:0 0;transform:rotate(90deg)">Visualizations</div>
<div class="a" style="left:2px;top:131px;width:1281px;height:7px;background:linear-gradient(rgba(0,0,0,0.075),rgba(0,0,0,0))"></div>

<!-- left nav icons & pane icons -->
<svg width="1283" height="812" style="left:0;top:0" fill="none">
 <path d="M19.2 145.2 V160.6 H34.5" stroke="#808080" stroke-width="1.3"/>
 <rect x="21.6" y="149.1" width="2.2" height="9.4" stroke="#222" stroke-width="1" fill="#bbb"/>
 <rect x="26.3" y="151.7" width="2.2" height="6.8" stroke="#222" stroke-width="1" fill="#bbb"/>
 <rect x="30.8" y="146.7" width="2.8" height="11.8" stroke="#333" stroke-width="1" fill="#bbb"/>
 <g stroke="#6a6a6a" stroke-width="1.1">
  <rect x="18" y="191" width="17.4" height="16.2" fill="#fff"/>
  <path d="M18 193.3 H35.4 M18 198.3 H35.4 M18 202.5 H35.4 M23.6 193.3 V207 M29.4 193.3 V207"/>
 </g>
 <g stroke="#6a6a6a" stroke-width="1.1">
  <rect x="16.8" y="242.6" width="7.8" height="8" fill="#fff"/>
  <path d="M16.8 246.4 H24.6"/>
  <rect x="28.6" y="236.8" width="8" height="8" fill="#fff"/>
  <path d="M28.6 240.7 H36.6"/>
  <rect x="28.6" y="248.6" width="8" height="8" fill="#fff"/>
  <path d="M28.6 252 H36.6"/>
  <path d="M21.4 242.6 V239.4 H28.6 M21.4 250.6 V254 H28.6"/>
 </g>
 <g stroke="#252423" stroke-width="1.2">
  <path d="M1224 143.5 L1217.5 150.2 L1224 157 M1231 143.5 L1224.5 150.2 L1231 157"/>
  <path d="M1262.8 147.3 L1256.3 154 L1262.8 160.7 M1269.8 147.3 L1263.3 154 L1269.8 160.7"/>
 </g>
 <path d="M1233 179.8 V192.8 L1227 187.2 H1220.7 V185.4 H1227 Z" stroke="#252423" stroke-width="1.1" stroke-linejoin="round"/>
</svg>
</body></html>
